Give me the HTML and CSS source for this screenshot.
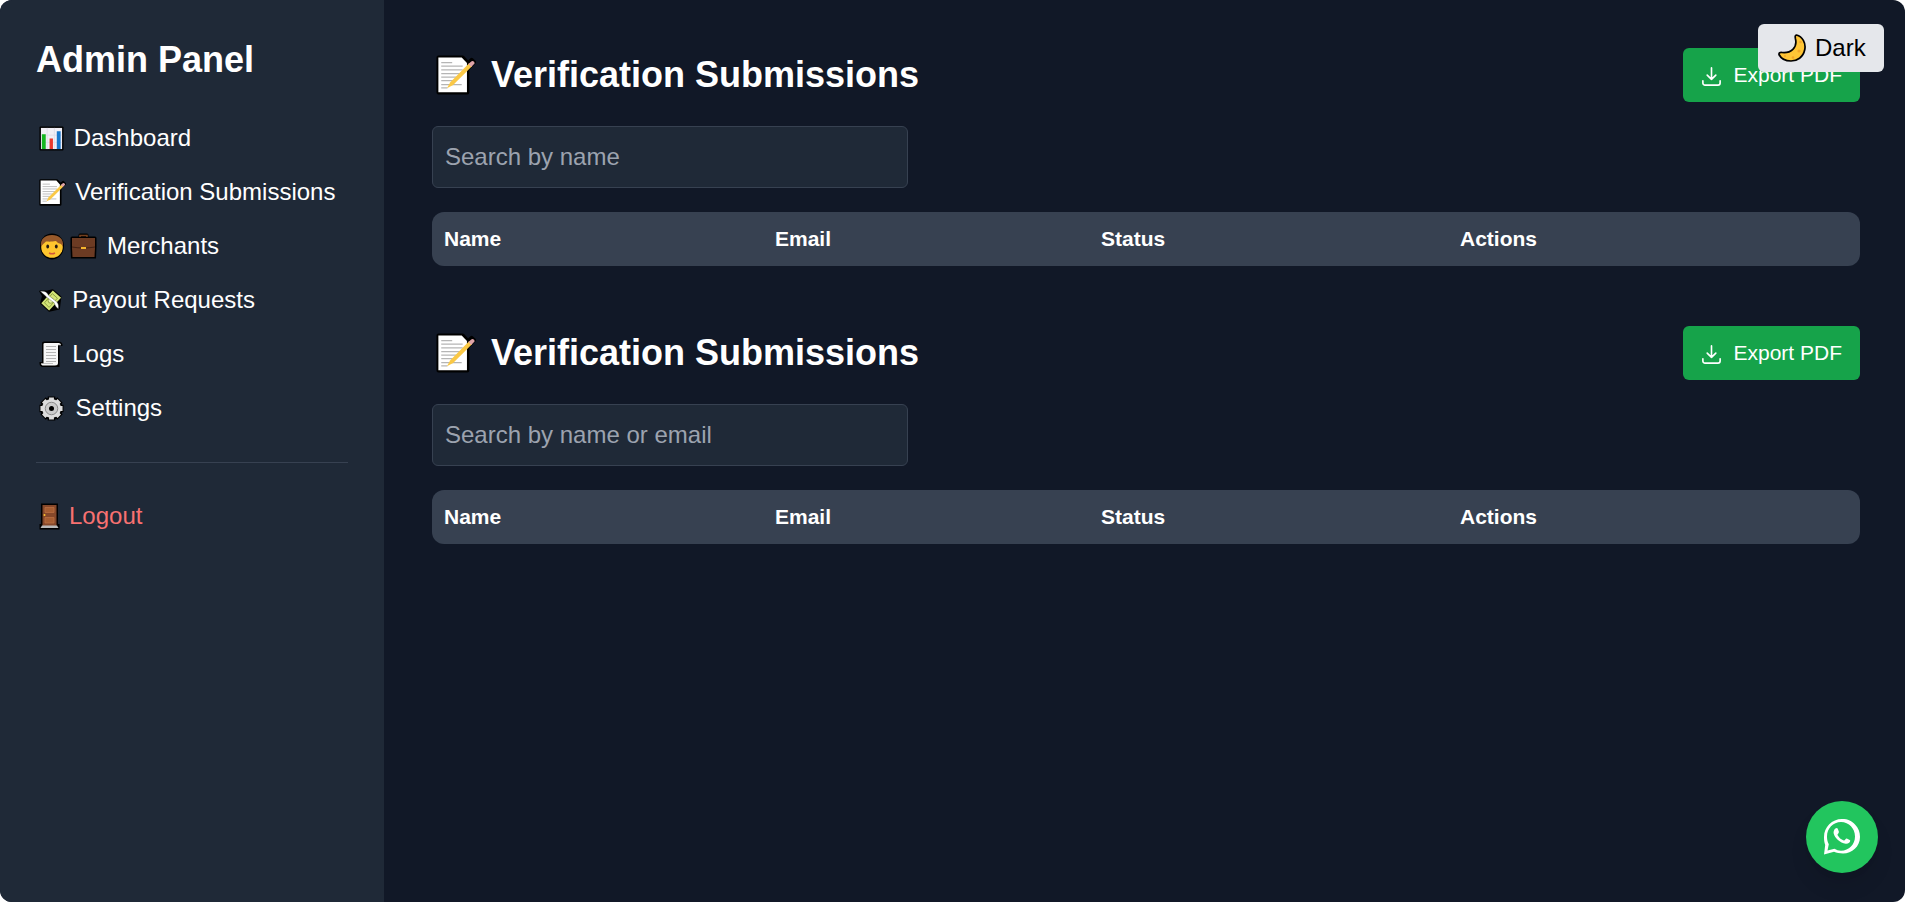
FILE: index.html
```html
<!DOCTYPE html>
<html lang="en">
<head>
<meta charset="utf-8">
<title>Admin Panel</title>
<link rel="stylesheet" href="styles.css">
</head>
<body>
<svg class="defs" width="0" height="0">
  <symbol id="memo" viewBox="0 0 42 42">
    <path d="M2.500 2.500H28L33.500 8.500 37.500 5 40 7.500 33 14.500V39.500H2.500Z" fill="#000" stroke="#000" stroke-width="4" stroke-linejoin="round"/>
    <path d="M2.500 2.500H27L32.500 8.500V39H2.500Z" fill="#fff"/>
    <path d="M5.500 8H17M5.500 11.800H28M5.500 15.500H28M5.500 19.500H26M5.500 23.300H24M5.500 27H20M5.500 31H27M5.500 34.500H12" stroke="#b5b5b5" stroke-width="1.300" fill="none"/>
    <path d="M11.500 35L15 28.500 35 8.500 38 11.500 18 31.500Z" fill="#fac846"/>
    <path d="M34 9.500L37 6.700Q38.500 5.700 40 7.200T39.500 10L37 12.500Z" fill="#dfa3a8"/>
  </symbol>
  <symbol id="download" viewBox="0 0 24 24">
    <path d="M3 16.500V18.750A2.250 2.250 0 0 0 5.250 21H18.750A2.250 2.250 0 0 0 21 18.750V16.500M16.500 10.500L12 15M12 15L7.500 10.500M12 15V3" fill="none" stroke="currentColor" stroke-width="1.700" stroke-linecap="round" stroke-linejoin="round"/>
  </symbol>
</svg>
<div class="app">
  <aside class="sidebar">
    <h2 class="brand">Admin Panel</h2>
    <nav class="nav">
      <a class="link"><span class="icon w-chart"><svg width="25" height="25" viewBox="0 0 26 26"><rect x=".5" y=".5" width="25" height="25" rx="1" fill="#000"/><rect x="2" y="2" width="22" height="22" fill="#f1eff6"/><path d="M8.500 2V24M16 2V24M2 9.500H24M2 17H24" stroke="#e0deea"/><path d="M3 8.500H7V24H3Z" fill="#16b621"/><path d="M11 13H14.500V24H11Z" fill="#e8392d"/><path d="M18.500 5.500H22.500V24H18.500Z" fill="#1878cd"/></svg></span>Dashboard</a>
      <a class="link"><span class="icon w-memo"><svg width="27" height="27"><use href="#memo"/></svg></span>Verification Submissions</a>
      <a class="link"><span class="icon w-duo"><svg width="26" height="27" viewBox="0 0 26 27"><path d="M13 .5C20 .500 25 6 25 13S20 26.500 13 26.500 1 20 1 13 6 .5 13 .5Z" fill="#000"/><circle cx="13" cy="14" r="10.800" fill="#ffc62e"/><path d="M2 13.500C1 6 6 2 13 2S25 6 24 13.500L22 11C20 10.500 18 9.500 17 8C12 9 8 8.500 7 8.500C5 10 4 11.500 2 13.500Z" fill="#97592a"/><ellipse cx="8.700" cy="13.500" rx="1.400" ry="2" fill="#241913"/><ellipse cx="17.300" cy="13.500" rx="1.400" ry="2" fill="#241913"/><path d="M10 20Q13 21.500 16 20" stroke="#d4583a" stroke-width="1.500" fill="none"/></svg><svg width="27" height="26" viewBox="0 0 27 26"><path d="M.5 5Q.5 3.500 2 3.500H8.500V2Q8.500 .5 10 .5H17Q18.500 .5 18.500 2V3.500H25Q26.500 3.500 26.500 5V14L26 25.500H1L.5 14Z" fill="#000"/><path d="M10 4V2.500H17V4" stroke="#74401f" stroke-width="1.500" fill="none"/><path d="M2 5H25V14.500L24.500 24H2.500L2 14.500Z" fill="#6c3b23"/><path d="M2 14Q8 15 13.500 15T25 14" stroke="#422113" fill="none"/><rect x="11" y="14" width="5" height="2" fill="#f5b52d"/></svg></span>Merchants</a>
      <a class="link"><span class="icon w-slim"><svg width="23" height="25" viewBox="0 0 25 26"><path d="M1 3L8 3 15 1.500 23.500 9 22 22 11 24.500 2 16 4 8Z" fill="#000" stroke="#000" stroke-width="1.500" stroke-linejoin="round"/><path d="M15 2L24 10 11 24 2.500 16Z" fill="#d3e477"/><path d="M14.500 5.500L20 10.500 11 20.500 6 15.500Z" fill="none" stroke="#8a9b3c"/><circle cx="12.800" cy="13" r="3" fill="#e4efa5" stroke="#8a9b3c"/><path d="M1.500 3Q8 2 10.500 7.500L18 13.500Q22 16 21 22Q18 20.500 16.500 15.500L8.500 9.500Q6 7 1.500 3Z" fill="#fff" stroke="#555" stroke-width=".4"/></svg></span>Payout Requests</a>
      <a class="link"><span class="icon w-slim"><svg width="24" height="27" viewBox="0 0 24 27"><path d="M3 2Q3 .5 5 .5H20Q24 1 23.500 5H20.500V26H3Q0 25 .5 21H3Z" fill="#000"/><path d="M4.500 3Q4.500 2 6 2H20Q22 2.500 22 4H19V22Q19 24.500 16 24.500H3.500Q2 24 2 22.500H4.500Z" fill="#f6f6f6"/><path d="M7 5.500H17M7 8.500H17M7 11.500H17M7 14.500H17M7 17.500H17M7 20.500H17" stroke="#b5b5b5"/><path d="M19 4H22M2 22.500H14" stroke="#aaa" stroke-width=".7"/></svg></span>Logs</a>
      <a class="link"><span class="icon w-gear"><svg width="25" height="25" viewBox="0 0 26 26"><circle cx="13" cy="13" r="11.500" fill="#000"/><path d="M13 .5V25.500M.5 13H25.500M4.200 4.200L21.800 21.800M21.800 4.200L4.200 21.800" stroke="#000" stroke-width="8"/><path d="M13 1.500V24.500M1.500 13H24.500M4.900 4.900L21.100 21.100M21.100 4.900L4.900 21.100" stroke="#ddd" stroke-width="5"/><circle cx="13" cy="13" r="9.800" fill="#ddd"/><circle cx="13" cy="13" r="6.500" fill="#ccc" stroke="#888"/><circle cx="13" cy="13" r="2.600" fill="#000"/></svg></span>Settings</a>
      <hr class="rule">
      <a class="link logout"><span class="icon w-door"><svg width="21" height="27" viewBox="0 0 21 27"><path d="M2 .5H19V21H20.500V26.500H.5V21H2Z" fill="#000"/><path d="M3.500 2H17.500V23H3.500Z" fill="#86482a"/><path d="M6 4.500H15V9.500H6ZM6 14.500H15V20H6Z" fill="#a65d32" stroke="#b96f41" stroke-width=".8"/><circle cx="5.500" cy="12" r="1" fill="#ffc62e"/><path d="M3 22.500H18L19.500 25H1.500Z" fill="#b9b9b9"/></svg></span>Logout</a>
    </nav>
  </aside>
  <main class="main">
    <section class="panel">
      <header class="head">
        <h1 class="title"><svg class="title-icon" width="40" height="40"><use href="#memo"/></svg>Verification Submissions</h1>
        <button class="export"><svg width="23" height="23"><use href="#download"/></svg>Export PDF</button>
      </header>
      <input class="search" placeholder="Search by name">
      <div class="table"><span>Name</span><span>Email</span><span>Status</span><span>Actions</span></div>
    </section>
    <section class="panel">
      <header class="head">
        <h1 class="title"><svg class="title-icon" width="40" height="40"><use href="#memo"/></svg>Verification Submissions</h1>
        <button class="export"><svg width="23" height="23"><use href="#download"/></svg>Export PDF</button>
      </header>
      <input class="search" placeholder="Search by name or email">
      <div class="table"><span>Name</span><span>Email</span><span>Status</span><span>Actions</span></div>
    </section>
  </main>
  <button class="theme"><svg width="28" height="28" viewBox="0 0 28 28"><path d="M18.500 1C24.500 2.500 28 9 26.800 15.500C25.200 23.500 19 27 13 27C7.500 27 3 24.500 1 20.500C.8 18.800 2 18.200 4 18.500C13 19.500 19.500 13.500 17.500 5C17 2.500 17 1.200 18.500 1Z" fill="#ffc636" stroke="#000" stroke-width="1.700" stroke-linejoin="round"/><circle cx="22.500" cy="8" r="1.300" fill="#f3a629"/><circle cx="21" cy="17" r="1.600" fill="#f3a629"/><circle cx="15" cy="23.500" r="1.300" fill="#f3a629"/><circle cx="7" cy="22" r="1" fill="#f3a629"/></svg>Dark</button>
  <a class="chat"><svg width="36" height="36" viewBox="0 0 36 36"><path fill="#fff" fill-rule="evenodd" d="M0 35.500L1.200 26C.3 23.500 0 21 0 18C0 8 8 0 18 0C24 0 28 2 31 5.500C34.500 9 36 13 36 18C36 27.500 28 34.500 19 34.500C15.500 34.500 12.500 33.800 10 32.800ZM3.500 31.500L10.500 29.800C12.500 31 14.500 31.700 17 31.700C25 31.700 31 25.500 31 17.500S25 3 17 3 3 9.500 3 17.500C3 20.500 3.600 23 4.800 25.300Z"/><path fill="#fff" d="M12.800 9C13.600 9 13.900 9.800 14.900 12.700C15.200 14.300 13 15.200 13.500 16C15 18.700 17 20.500 19.800 21.500C20.900 21.800 21.700 19.300 22.800 19.600L26.200 21.300C26.500 23.500 24 25 21.700 24.700C16 24 10.800 19 9.700 14.500C9.300 12 10.800 9 12.800 9Z"/></svg></a>
</div>
</body>
</html>
```
FILE: styles.css
```css
* { box-sizing: border-box; }
html { font-size: 24px; background: #fff; }
body { margin: 0; font-family: "Liberation Sans", Arial, sans-serif; line-height: 1.5; color: #fff; }
h1, h2 { margin: 0; }
button, input { font: inherit; border: 0; }
.defs { position: absolute; }
.app { display: flex; height: 902px; background: #111827; border-radius: 12px; overflow: hidden; }
.sidebar { width: 384px; flex: none; padding: 36px; background: #1f2937; }
.brand { font-size: 36px; line-height: 48px; margin-bottom: 36px; }
.nav { display: flex; flex-direction: column; gap: 18px; }
.link { display: flex; align-items: center; height: 36px; white-space: nowrap; }
.icon { display: flex; flex: none; align-items: center; gap: 5px; padding-left: 3px; }
.w-chart { width: 37.700px; }
.w-memo { width: 39.300px; }
.w-duo { width: 71px; }
.w-slim { width: 36.200px; }
.w-gear { width: 39.400px; }
.w-door { width: 33px; }
.rule { width: 100%; margin: 18px 0; border: 0; border-top: 1px solid #374151; height: 0; }
.logout { color: #f87171; margin-top: -1px; }
.main { flex: 1; padding: 48px 45px 48px 48px; display: flex; flex-direction: column; gap: 60px; }
.panel { display: flex; flex-direction: column; gap: 24px; }
.head { display: flex; justify-content: space-between; align-items: center; height: 54px; }
.title { display: flex; align-items: center; font-size: 36px; line-height: 48px; }
.title-icon { margin: 0 15px 1px 4px; }
.export { display: flex; align-items: center; gap: 10px; height: 54px; padding: 0 18px 0 17.500px; border-radius: 6px; background: #16a34a; color: #fff; font-size: 21px; }
.export svg { margin-top: 3px; }
.search { width: 476px; height: 62px; padding: 0 12px; border: 1px solid #374151; border-radius: 6px; background: #1f2937; color: #fff; }
.search::placeholder { color: #9ca3af; opacity: 1; }
.table { display: grid; grid-template-columns: 331px 326px 359px 1fr; align-items: center; height: 54px; border-radius: 12px; background: #374151; font-size: 21px; font-weight: 700; }
.table span { padding-left: 12px; }
.theme { position: absolute; top: 24px; right: 21px; display: flex; align-items: center; gap: 9px; width: 126px; height: 48px; padding: 0 0 0 20px; border-radius: 6px; background: #e5e7eb; color: #000; }
.chat { position: absolute; right: 27px; bottom: 29px; display: grid; place-items: center; width: 72px; height: 72px; border-radius: 50%; background: #22c55e; box-shadow: 0 15px 22px -4px rgba(0, 0, 0, .1), 0 6px 9px -6px rgba(0, 0, 0, .1); }
```
